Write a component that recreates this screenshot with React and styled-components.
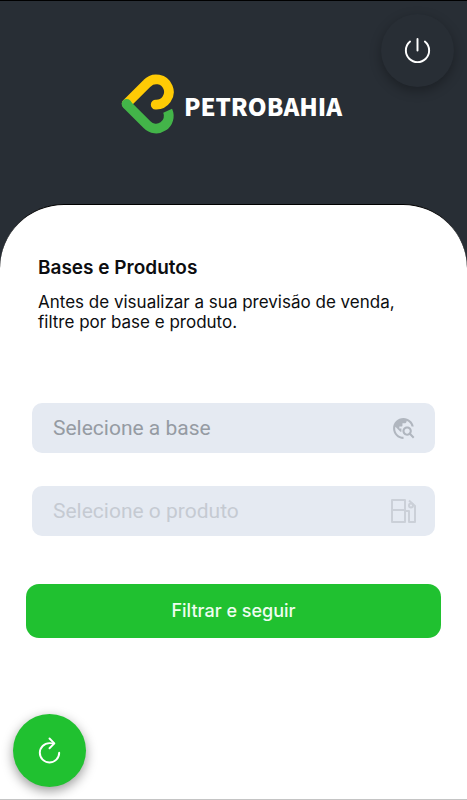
import React from "react";
import styled, { createGlobalStyle } from "styled-components";
import { IoPowerOutline, IoRefreshOutline } from "react-icons/io5";
import { MdTravelExplore } from "react-icons/md";

const GlobalStyle = createGlobalStyle`
  * { box-sizing: border-box; }
  body {
    margin: 0;
    background: #282e35;
    font-family: Inter, "Liberation Sans", sans-serif;
  }
`;

const Screen = styled.div`
  display: flex;
  flex-direction: column;
  min-height: 100vh;
  border-top: 1px solid #000;
  background: #282e35;
`;

const Header = styled.header`
  position: relative;
  display: flex;
  justify-content: center;
  padding: 72px 20px 68px 16px;
`;

const Brand = styled.div`
  display: flex;
  align-items: center;
  gap: 9px;
`;

const Wordmark = styled.span`
  padding-top: 3px;
  color: #fff;
  font: 900 24px/60px "Noto Sans CJK JP", "Noto Sans", sans-serif;
`;

const RoundButton = styled.button`
  display: flex;
  align-items: center;
  justify-content: center;
  width: 73px;
  height: 73px;
  padding: 0;
  border: 0;
  border-radius: 50%;
  color: #fff;
  background: ${({ $green }) => ($green ? "#20c130" : "#282e35")};
  box-shadow: 0 4px 12px ${({ $green }) => ($green ? "rgba(0, 0, 0, 0.4)" : "rgba(0, 0, 0, 0.3)")};
  cursor: pointer;
`;

const PowerSlot = styled.div`
  position: absolute;
  top: 13px;
  right: 13px;
`;

const Sheet = styled.main`
  display: flex;
  flex: 1;
  flex-direction: column;
  padding: 51px 26px 12px;
  border-top: 1px solid #000;
  border-bottom: 1px solid #c4c4c4;
  border-radius: 64px 64px 0 0;
  background: #fff;
`;

const Intro = styled.div`
  padding: 0 12px;
  color: #0c0d0f;
`;

const Title = styled.h1`
  margin: 0 0 12px;
  font-size: 19px;
  font-weight: 600;
  line-height: 24px;
`;

const Description = styled.p`
  margin: 0;
  font-size: 17px;
  line-height: 20px;
`;

const Form = styled.form`
  display: flex;
  flex-direction: column;
  margin-top: 71px;
`;

const Fields = styled.div`
  display: grid;
  gap: 33px;
  padding: 0 6px;
`;

const Field = styled.div`
  display: grid;
  grid-template-columns: 1fr 64px;
  align-items: center;
  height: 50px;
  border-radius: 10px;
  background: #e5eaf2;
  color: ${({ $muted }) => ($muted ? "#c5cad2" : "#959ba3")};
`;

const Select = styled.select`
  grid-area: 1 / 1 / 2 / 3;
  width: 100%;
  height: 100%;
  padding: 0 64px 0 21px;
  border: 0;
  border-radius: 10px;
  appearance: none;
  background: transparent;
  color: inherit;
  font: 400 21px/24px Roboto, sans-serif;
  opacity: 1;
`;

const FieldIcon = styled.span`
  grid-area: 1 / 2;
  display: flex;
  justify-content: center;
  color: ${({ $muted }) => ($muted ? "#cbd0d8" : "#b0b6bf")};
  pointer-events: none;
`;

const Submit = styled.button`
  height: 54px;
  margin-top: 48px;
  border: 0;
  border-radius: 13px;
  background: #20c130;
  color: #effdf0;
  font: 500 18px/24px Inter, sans-serif;
  cursor: pointer;
`;

const Footer = styled.footer`
  margin: auto -13px 0;
`;

function Logo() {
  return (
    <svg width="54" height="61" viewBox="37 41 162 183" fill="none" strokeWidth="29" aria-hidden="true">
      <path d="M54 130 115 69A38 38 0 1 1 141 133" stroke="#ffcb05" strokeLinecap="round" strokeLinejoin="round" />
      <path d="M54 132 115 193A38 38 0 0 0 177 151" stroke="#43b449" strokeLinejoin="round" />
      <circle cx="54" cy="131" r="15" fill="#43b449" stroke="none" />
    </svg>
  );
}

function PumpIcon() {
  return (
    <svg width="26" height="26" viewBox="0 0 26 26" fill="none" stroke="currentColor" strokeWidth="2" strokeLinejoin="round" aria-hidden="true">
      <path d="M2 2h13v22H2zM2 12h13M15 13h4v11h6V8l-6-5.500" />
      <circle cx="21" cy="7.500" r="2" />
    </svg>
  );
}

function SelectField({ label, icon, muted, disabled }) {
  return (
    <Field $muted={muted}>
      <Select aria-label={label} defaultValue="" disabled={disabled}>
        <option value="">{label}</option>
      </Select>
      <FieldIcon $muted={muted}>{icon}</FieldIcon>
    </Field>
  );
}

export default function App() {
  return (
    <Screen>
      <GlobalStyle />
      <Header>
        <Brand>
          <Logo />
          <Wordmark>PETROBAHIA</Wordmark>
        </Brand>
        <PowerSlot>
          <RoundButton type="button" aria-label="Sair">
            <IoPowerOutline size={31} />
          </RoundButton>
        </PowerSlot>
      </Header>
      <Sheet>
        <Intro>
          <Title>Bases e Produtos</Title>
          <Description>
            Antes de visualizar a sua previsão de venda, filtre por base e produto.
          </Description>
        </Intro>
        <Form onSubmit={(event) => event.preventDefault()}>
          <Fields>
            <SelectField label="Selecione a base" icon={<MdTravelExplore size={25} />} />
            <SelectField label="Selecione o produto" icon={<PumpIcon />} muted disabled />
          </Fields>
          <Submit type="submit">Filtrar e seguir</Submit>
        </Form>
        <Footer>
          <RoundButton type="button" aria-label="Atualizar" $green>
            <IoRefreshOutline size={31} />
          </RoundButton>
        </Footer>
      </Sheet>
    </Screen>
  );
}
